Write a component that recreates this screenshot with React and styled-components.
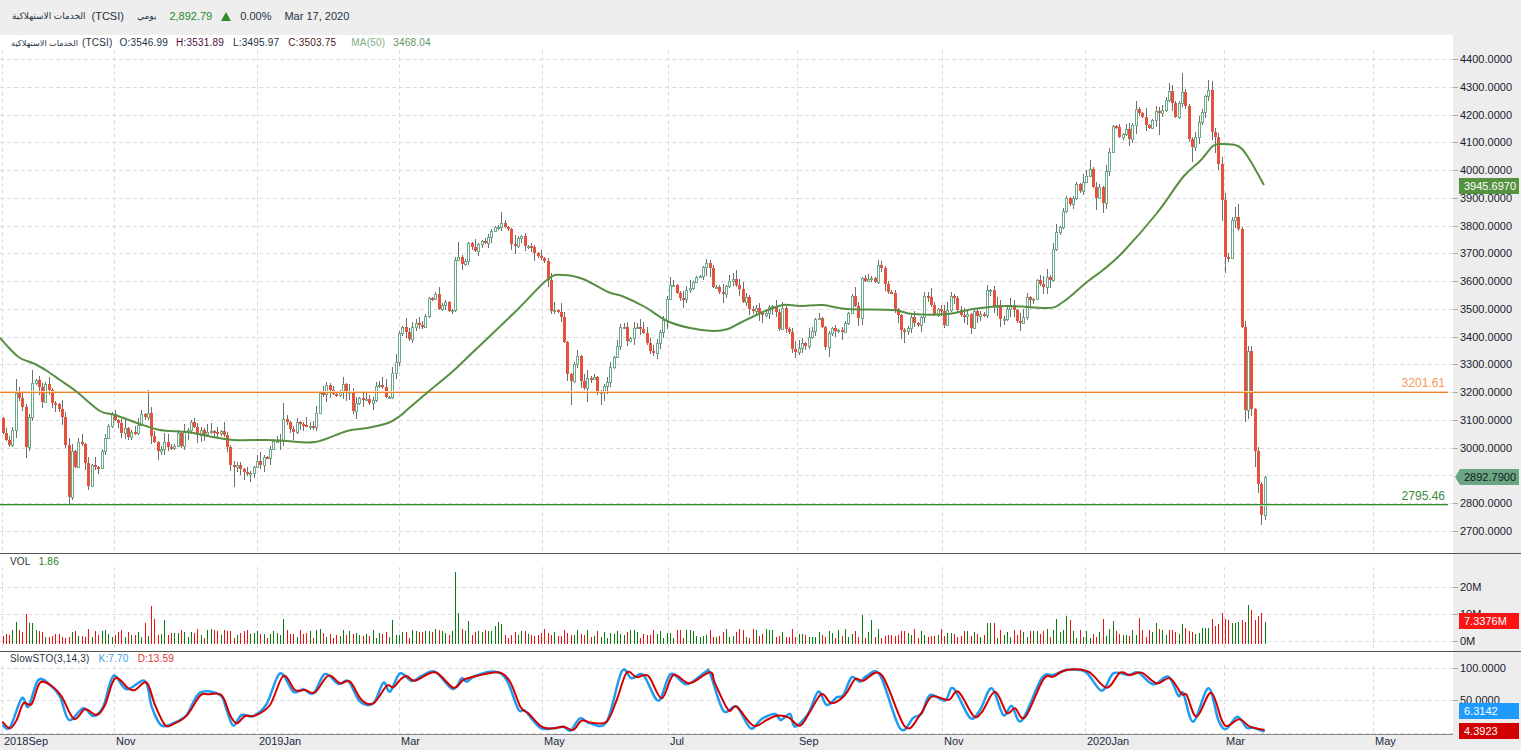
import React from 'react';
import styled, { createGlobalStyle } from 'styled-components';

const GlobalStyle = createGlobalStyle`
  html, body { margin: 0; padding: 0; background: #fff; }
  body { font-family: "Liberation Sans", "DejaVu Sans", sans-serif; overflow: hidden; }
`;

const PLOT_WIDTH = 1453;
const SLOT = 3.304;
const TITLE_AR = 'الخدمات الاستهلاكية';

// daily closes, as page y pixels
const CLOSES = [
  433, 440, 445, 430, 393, 398, 407, 447, 417, 383,
  380, 387, 402, 384, 390, 403, 404, 409, 417, 445,
  497, 451, 467, 442, 444, 463, 486, 465, 467, 468,
  451, 438, 426, 414, 420, 423, 433, 428, 437, 432,
  433, 425, 414, 417, 413, 436, 442, 451, 449, 442,
  447, 448, 446, 433, 446, 432, 430, 422, 427, 435,
  430, 434, 432, 431, 432, 433, 431, 435, 447, 465,
  467, 465, 469, 472, 474, 473, 467, 461, 465, 457,
  458, 449, 441, 441, 440, 419, 422, 429, 432, 422,
  424, 425, 426, 426, 427, 413, 393, 394, 385, 390,
  394, 395, 392, 384, 392, 392, 411, 403, 398, 400,
  399, 403, 400, 386, 385, 387, 397, 397, 373, 362,
  333, 327, 332, 339, 327, 323, 325, 327, 316, 298,
  299, 294, 309, 305, 302, 311, 310, 260, 257, 264,
  261, 243, 247, 251, 244, 241, 243, 237, 231, 227,
  227, 223, 227, 229, 244, 246, 238, 236, 246, 246,
  247, 253, 256, 258, 261, 280, 311, 310, 312, 317,
  342, 374, 381, 364, 356, 381, 388, 378, 379, 377,
  393, 392, 386, 382, 367, 357, 346, 327, 327, 341,
  338, 328, 327, 329, 333, 343, 351, 353, 343, 332,
  320, 299, 285, 285, 293, 298, 299, 290, 288, 282,
  277, 276, 267, 263, 268, 287, 287, 292, 294, 286,
  281, 279, 285, 289, 302, 297, 309, 311, 308, 313,
  315, 313, 307, 306, 312, 329, 308, 329, 332, 349,
  352, 348, 343, 346, 337, 331, 319, 318, 327, 347,
  333, 328, 331, 330, 332, 323, 313, 296, 306, 318,
  278, 281, 279, 278, 282, 265, 268, 284, 292, 293,
  309, 315, 330, 331, 328, 317, 323, 325, 317, 296,
  297, 305, 315, 309, 311, 325, 310, 296, 298, 310,
  315, 316, 314, 328, 311, 316, 314, 315, 290, 290,
  307, 305, 319, 319, 309, 305, 310, 321, 323, 317,
  297, 300, 299, 280, 284, 287, 277, 280, 249, 232,
  227, 211, 198, 204, 198, 184, 191, 182, 176, 169,
  187, 198, 187, 203, 171, 152, 126, 127, 137, 134,
  129, 139, 125, 109, 113, 117, 125, 128, 120, 111,
  113, 110, 100, 91, 103, 117, 103, 92, 106, 139,
  147, 137, 122, 112, 96, 90, 132, 137, 164, 200,
  257, 258, 220, 217, 229, 327, 410, 351, 409, 451, 484, 515, 477,
];

// wicks that stand out: index -> [high, low]
const WICKS = {
  4: [379], 7: [null, 458], 9: [370], 20: [null, 504], 44: [390], 70: [null, 487], 85: [403],
  138: [242], 151: [212], 172: [null, 405], 177: [null, 402], 181: [null, 405], 206: [null, 308],
  213: [259], 250: [null, 357], 273: [null, 343], 331: [null, 210], 333: [null, 213], 350: [null, 135],
  353: [83], 357: [73], 360: [null, 162], 365: [80], 367: [null, 153], 369: [null, 221], 370: [null, 273],
  371: [null, 262], 373: [207], 374: [204], 376: [null, 422], 377: [346], 378: [346, 416],
  379: [null, 467], 380: [null, 493], 381: [null, 525], 382: [476, 520],
};

const VOLUME_SPIKES = {
  4: 22, 7: 30, 8: 21, 9: 21, 10: 14, 43: 21, 45: 38, 46: 25, 49: 24, 85: 25, 118: 24, 137: 72, 138: 31,
  141: 23, 149: 18, 150: 22, 151: 20, 260: 29, 263: 24, 298: 21, 299: 21, 300: 21, 319: 25, 322: 28,
  323: 24, 333: 25, 336: 23, 344: 26,
};

// last bars read off the picture; negative = red
const VOLUME_TAIL = [
  12, 21, -15, 14, 9, -14, -14, -12, 10, 20, -16, -13, -12, 10, 11, 16, 16, 16,
  -25, -18, -20, -31, -25, -24, 21, 21, 22, -24, -22, 39, -34, -24, -28, -31, 22,
];

const MA = [
  [0, 338], [10, 349], [20, 358], [35, 364], [47, 371], [60, 380], [77, 392], [100, 411], [115, 415], [137, 423],
  [160, 430], [187, 432], [213, 437], [233, 440], [267, 440], [287, 441], [315, 442], [347, 431], [367, 428],
  [388, 423], [400, 416], [408, 409], [428, 392], [452, 372], [472, 353], [515, 312], [548, 279], [563, 275],
  [583, 279], [608, 292], [622, 296], [645, 307], [667, 321], [690, 328], [713, 331], [728, 329], [740, 323],
  [763, 312], [783, 305], [800, 306], [823, 305], [847, 309], [893, 310], [913, 314], [947, 314], [973, 309],
  [1007, 306], [1048, 308], [1063, 302], [1087, 282], [1103, 270], [1123, 252], [1157, 213], [1183, 177],
  [1200, 161], [1213, 146], [1222, 144], [1238, 146], [1248, 157], [1264, 185],
];

// stochastic traces, written as [x, y] pairs measured in 3x crops of the lower panes
const crop = (offset, flat) => {
  const pts = [];
  for (let i = 0; i < flat.length; i += 2) pts.push([offset + flat[i] / 3, 550 + flat[i + 1] / 3]);
  return pts;
};

const STO_K = [
  ...crop(0, [7, 525, 30, 532, 65, 445, 85, 470, 115, 390, 150, 405, 180, 440, 207, 510, 250, 475, 280, 498, 310, 470,
    340, 378, 380, 418, 435, 393, 455, 470, 485, 527, 530, 515, 560, 495, 600, 428, 660, 435, 680, 480, 700, 527,
    725, 495, 760, 498, 800, 462, 840, 370, 880, 425, 910, 418, 940, 430, 975, 372, 1015, 402, 1045, 393, 1080, 455,
    1120, 460, 1150, 398, 1170, 425]),
  ...crop(400, [0, 370, 35, 393, 65, 378, 105, 365, 158, 417, 185, 385, 200, 395, 225, 378, 285, 365, 320, 390, 355, 478,
    375, 482, 420, 533, 460, 535, 490, 530, 512, 542, 540, 505, 570, 520, 620, 515, 665, 365, 695, 385, 730, 375,
    775, 452, 812, 372, 860, 403, 915, 367, 930, 370, 970, 482, 1010, 470, 1052, 535, 1085, 507, 1125, 492, 1143, 510,
    1170, 492]),
  ...crop(800, [-15, 530, 25, 490, 55, 425, 80, 465, 110, 442, 130, 435, 155, 382, 180, 395, 200, 378, 240, 375, 300, 535,
    340, 503, 365, 490, 390, 435, 435, 452, 460, 415, 510, 503, 540, 480, 575, 415, 610, 495, 635, 468, 665, 512,
    725, 385, 760, 375, 800, 360, 856, 365, 905, 422, 940, 370, 985, 375, 1015, 368, 1060, 403, 1105, 380, 1135, 437,
    1150, 430, 1180, 515, 1225, 415, 1255, 510, 1278, 537, 1312, 500, 1340, 533, 1360, 533, 1394, 545]),
];

const STO_D = [
  ...crop(0, [7, 515, 30, 535, 50, 510, 70, 460, 95, 462, 120, 398, 155, 408, 185, 440, 222, 507, 255, 478, 290, 495,
    315, 465, 345, 385, 385, 415, 405, 420, 440, 398, 465, 465, 495, 525, 520, 522, 560, 497, 600, 437, 625, 433,
    665, 436, 690, 495, 710, 520, 735, 498, 765, 497, 810, 465, 850, 378, 885, 420, 915, 420, 945, 427, 985, 377,
    1020, 400, 1050, 395, 1085, 450, 1120, 460, 1160, 408, 1180, 412]),
  ...crop(400, [0, 390, 20, 378, 45, 392, 105, 367, 160, 413, 190, 390, 230, 378, 295, 367, 330, 395, 362, 472, 385, 490,
    425, 530, 460, 535, 490, 530, 520, 540, 545, 512, 575, 518, 620, 515, 650, 450, 680, 368, 710, 382, 745, 378,
    785, 445, 820, 375, 868, 400, 930, 367, 945, 400, 985, 480, 1010, 470, 1060, 527, 1100, 510, 1130, 497, 1165, 502]),
  ...crop(800, [0, 527, 30, 485, 65, 432, 95, 460, 135, 435, 165, 388, 190, 392, 245, 375, 315, 530, 360, 495, 395, 440,
    445, 450, 475, 425, 520, 497, 545, 487, 585, 425, 620, 488, 645, 475, 675, 502, 730, 388, 760, 380, 800, 360,
    865, 365, 920, 413, 960, 368, 990, 375, 1025, 368, 1070, 400, 1110, 385, 1145, 432, 1160, 435, 1190, 500,
    1233, 428, 1265, 510, 1282, 528, 1318, 508, 1350, 530, 1394, 540]),
];

const MONTHS = [
  [2, '2018Sep'], [114, 'Nov'], [257, '2019Jan'], [399, 'Mar'], [542, 'May'], [668, 'Jul'],
  [797, 'Sep'], [942, 'Nov'], [1085, '2020Jan'], [1224, 'Mar'], [1373, 'May'],
];

const PRICE_TICKS = Array.from({ length: 18 }, (_, i) => ({
  label: `${4400 - i * 100}.0000`,
  y: Math.floor(59.5 + i * 27.76),
}));
// 2900 sits right under the last price tag
const PRICE_LABELS = PRICE_TICKS.filter((t) => t.label !== '2900.0000');
const VOL_TICKS = [{ label: '20M', y: 587 }, { label: '10M', y: 614 }, { label: '0M', y: 641 }];
const STO_TICKS = [{ label: '100.0000', y: 668 }, { label: '50.0000', y: 700 }];
const STO_GRID = [...STO_TICKS, { y: 733 }];

const rnd = (i, k) => {
  const s = Math.sin(i * 12.9898 + k * 78.233) * 43758.5453;
  return s - Math.floor(s);
};

const slotX = (i) => Math.round(2.5 + i * SLOT) + 0.5;

const smooth = (pts) => {
  let d = `M${pts[0][0]} ${pts[0][1]}`;
  for (let i = 0; i < pts.length - 1; i++) {
    const p0 = pts[i - 1] || pts[i];
    const p1 = pts[i];
    const p2 = pts[i + 1];
    const p3 = pts[i + 2] || p2;
    d += `C${p1[0] + (p2[0] - p0[0]) / 6} ${p1[1] + (p2[1] - p0[1]) / 6} ${p2[0] - (p3[0] - p1[0]) / 6} ${p2[1] - (p3[1] - p1[1]) / 6} ${p2[0]} ${p2[1]}`;
  }
  return d;
};

const Page = styled.div`
  display: flex;
  flex-direction: column;
  width: 100vw;
  height: 100vh;
  overflow: hidden;
  color: #1f2d3d;
`;

const TopBar = styled.div`
  display: flex;
  align-items: center;
  flex: 0 0 35px;
  box-sizing: border-box;
  padding: 0 0 3px 12px;
  background: #eeeeee;
  font-size: 11px;
  color: #26323e;
`;

const TopItem = styled.span`
  margin-left: ${(p) => p.$gap || 0}px;
  color: ${(p) => p.$color || 'inherit'};
  font-size: ${(p) => p.$size || 11}px;
  white-space: nowrap;
`;

const UpTriangle = styled.span`
  width: 0;
  height: 0;
  margin-left: 9px;
  border-left: 5.5px solid transparent;
  border-right: 5.5px solid transparent;
  border-bottom: 9px solid #2e8b2e;
`;

const Pane = styled.div`
  display: flex;
  flex: 0 0 ${(p) => p.$height}px;
  border-bottom: ${(p) => (p.$divider ? '1px solid #555' : 'none')};
  box-sizing: border-box;
`;

const Plot = styled.div`
  position: relative;
  flex: 0 0 ${PLOT_WIDTH}px;
  background: #fff;
  border-bottom: ${(p) => (p.$closed ? '1px solid #8a8a8a' : 'none')};
  box-sizing: border-box;
  svg { display: block; }
`;

const Axis = styled.div`
  position: relative;
  flex: 1;
  background: #ededed;
  font-size: 11px;
  color: #17202c;
`;

const AxisLabel = styled.div`
  position: absolute;
  left: 0;
  display: flex;
  align-items: center;
  gap: 2px;
  transform: translateY(-50%);
  line-height: 12px;
  &::before {
    content: '';
    width: 5px;
    height: 1px;
    background: #9fb49f;
  }
`;

const PriceTag = styled.div`
  position: absolute;
  z-index: 2;
  left: ${(p) => (p.$pointer ? 2 : 6)}px;
  right: 2px;
  height: 16px;
  padding-left: ${(p) => (p.$pointer ? 9 : 5)}px;
  background: ${(p) => p.$bg};
  color: ${(p) => p.$color || '#fff'};
  font-size: 11px;
  line-height: 16px;
  clip-path: ${(p) => (p.$pointer ? 'polygon(5px 0, 100% 0, 100% 100%, 5px 100%, 0 50%)' : 'none')};
`;

const Legend = styled.div`
  position: absolute;
  top: ${(p) => p.$top || 0}px;
  left: ${(p) => p.$left || 10}px;
  display: flex;
  align-items: center;
  height: 15px;
  font-size: 10px;
  letter-spacing: 0.2px;
  white-space: nowrap;
`;

const LegendText = styled.span`
  margin-left: ${(p) => p.$gap || 0}px;
  color: ${(p) => p.$color || '#26323e'};
`;

const LegendArabic = styled.span`
  font-size: 8.2px;
  letter-spacing: 0;
  color: #26323e;
`;

const LevelLabel = styled.div`
  position: absolute;
  right: 8px;
  font-size: 12px;
  line-height: 14px;
  color: ${(p) => p.$color};
`;

const TimeAxis = styled.div`
  position: relative;
  flex: 1;
  background: #ededed;
  font-size: 11px;
  color: #1c2b44;
`;

const MonthLabel = styled.span`
  position: absolute;
  top: -1px;
  line-height: 14px;
`;

const Grid = ({ ticks, top, bottom }) => (
  <g shapeRendering="crispEdges" stroke="#dcdcdc" strokeDasharray="4 3">
    {ticks.map((t) => (
      <line key={t.y} x1="0" x2={PLOT_WIDTH} y1={t.y + 0.5} y2={t.y + 0.5} />
    ))}
    {MONTHS.map(([x]) => (
      <line key={x} x1={x + 0.5} x2={x + 0.5} y1={top} y2={bottom} />
    ))}
  </g>
);

const Candle = ({ i }) => {
  const close = CLOSES[i];
  const open = i === 0 ? 418 : CLOSES[i - 1];
  const up = close <= open;
  const bodyTop = Math.min(open, close);
  const bodyBottom = Math.max(open, close);
  const [high, low] = WICKS[i] || [];
  const cx = slotX(i);
  const wickTop = high ?? bodyTop - 1 - Math.pow(rnd(i, 1), 2) * 8;
  const wickBottom = low ?? bodyBottom + 1 + Math.pow(rnd(i, 2), 2) * 8;

  return (
    <g>
      <line x1={cx} x2={cx} y1={wickTop} y2={wickBottom} stroke="#6e6e6e" />
      {up ? (
        <rect x={cx - 1} y={bodyTop + 0.5} width="2" height={Math.max(bodyBottom - bodyTop, 1)} fill="#fff" stroke="#6da888" />
      ) : (
        <rect x={cx - 1.5} y={bodyTop} width="3" height={Math.max(bodyBottom - bodyTop, 2)} fill="#e5533f" />
      )}
    </g>
  );
};

const volumeAt = (i) => {
  const fromTail = i - (CLOSES.length - VOLUME_TAIL.length);
  if (fromTail >= 0) return { h: Math.abs(VOLUME_TAIL[fromTail]), up: VOLUME_TAIL[fromTail] > 0 };
  return {
    h: VOLUME_SPIKES[i] || 6 + Math.round(rnd(i, 3) * 9),
    up: i > 0 ? CLOSES[i] <= CLOSES[i - 1] : false,
  };
};

const PriceChart = () => (
  <svg width={PLOT_WIDTH} height="518" viewBox={`0 35 ${PLOT_WIDTH} 518`}>
    <Grid ticks={PRICE_TICKS} top={50} bottom={553} />
    <g shapeRendering="crispEdges">
      {CLOSES.map((_, i) => (
        <Candle key={i} i={i} />
      ))}
      <rect x="0" y="391" width="1448" height="1" fill="#fbd0ac" />
      <rect x="0" y="392" width="1448" height="1" fill="#f58220" />
      <rect x="0" y="504" width="1448" height="1" fill="#2e8b2e" />
      <rect x="0" y="505" width="1448" height="1" fill="#b9dcb0" />
    </g>
    <path d={smooth(MA)} fill="none" stroke="#568f42" strokeWidth="2" />
  </svg>
);

const VolumeChart = () => (
  <svg width={PLOT_WIDTH} height="97" viewBox={`0 554 ${PLOT_WIDTH} 97`}>
    <Grid ticks={VOL_TICKS} top={567} bottom={651} />
    <g shapeRendering="crispEdges">
      {CLOSES.map((_, i) => {
        const { h, up } = volumeAt(i);
        return <line key={i} x1={slotX(i)} x2={slotX(i)} y1={644 - h} y2={644} stroke={up ? '#0a7d0a' : '#f01010'} />;
      })}
    </g>
  </svg>
);

const StochasticChart = () => (
  <svg width={PLOT_WIDTH} height="82" viewBox={`0 652 ${PLOT_WIDTH} 82`}>
    <Grid ticks={STO_GRID} top={665} bottom={734} />
    <path d={smooth(STO_K)} fill="none" stroke="#1f9bf0" strokeWidth="2.5" />
    <path d={smooth(STO_D)} fill="none" stroke="#d40000" strokeWidth="2" />
  </svg>
);

const App = () => (
  <Page>
    <GlobalStyle />
    <TopBar>
      <TopItem $size={9}>{TITLE_AR}</TopItem>
      <TopItem $gap={6}>(TCSI)</TopItem>
      <TopItem $gap={13} $size={9}>يومي</TopItem>
      <TopItem $gap={13} $color="#1e8a1e">2,892.79</TopItem>
      <UpTriangle />
      <TopItem $gap={9}>0.00%</TopItem>
      <TopItem $gap={13}>Mar 17, 2020</TopItem>
    </TopBar>

    <Pane $height={519} $divider>
      <Plot>
        <PriceChart />
        <Legend $left={11}>
          <LegendArabic>{TITLE_AR}</LegendArabic>
          <LegendText $gap={4}>(TCSI)</LegendText>
          <LegendText $gap={7} $color="#16324a">O:3546.99</LegendText>
          <LegendText $gap={8} $color="#4f0f45">H:3531.89</LegendText>
          <LegendText $gap={9} $color="#16324a">L:3495.97</LegendText>
          <LegendText $gap={9} $color="#4a1a1a">C:3503.75</LegendText>
          <LegendText $gap={15} $color="#7fae7f">MA(50)</LegendText>
          <LegendText $gap={8} $color="#5f9360">3468.04</LegendText>
        </Legend>
        <LevelLabel $color="#f4995c" style={{ top: 341 }}>3201.61</LevelLabel>
        <LevelLabel $color="#3d8a3d" style={{ top: 454 }}>2795.46</LevelLabel>
      </Plot>
      <Axis>
        {PRICE_LABELS.map((t) => (
          <AxisLabel key={t.label} style={{ top: t.y - 35 }}>{t.label}</AxisLabel>
        ))}
        <PriceTag $bg="#55923f" style={{ top: 143 }}>3945.6970</PriceTag>
        <PriceTag $pointer $bg="#6aa584" $color="#10201a" style={{ top: 434 }}>2892.7900</PriceTag>
      </Axis>
    </Pane>

    <Pane $height={98} $divider>
      <Plot>
        <VolumeChart />
        <Legend>
          <LegendText>VOL</LegendText>
          <LegendText $gap={8} $color="#1a7a1a">1.86</LegendText>
        </Legend>
      </Plot>
      <Axis>
        {VOL_TICKS.map((t) => (
          <AxisLabel key={t.label} style={{ top: t.y - 554 }}>{t.label}</AxisLabel>
        ))}
        <PriceTag $bg="#fb1414" style={{ top: 59 }}>7.3376M</PriceTag>
      </Axis>
    </Pane>

    <Pane $height={83}>
      <Plot $closed>
        <StochasticChart />
        <Legend $top={-1}>
          <LegendText>SlowSTO(3,14,3)</LegendText>
          <LegendText $gap={9} $color="#3aa0e8">K:7.70</LegendText>
          <LegendText $gap={9} $color="#e03030">D:13.59</LegendText>
        </Legend>
      </Plot>
      <Axis>
        {STO_TICKS.map((t) => (
          <AxisLabel key={t.label} style={{ top: t.y - 652 }}>{t.label}</AxisLabel>
        ))}
        <PriceTag $bg="#1e9bff" style={{ top: 51 }}>6.3142</PriceTag>
        <PriceTag $bg="#d20000" style={{ top: 71 }}>4.3923</PriceTag>
      </Axis>
    </Pane>

    <TimeAxis>
      {MONTHS.map(([x, label]) => (
        <MonthLabel key={x} style={{ left: x + 2 }}>{label}</MonthLabel>
      ))}
    </TimeAxis>
  </Page>
);

export default App;
